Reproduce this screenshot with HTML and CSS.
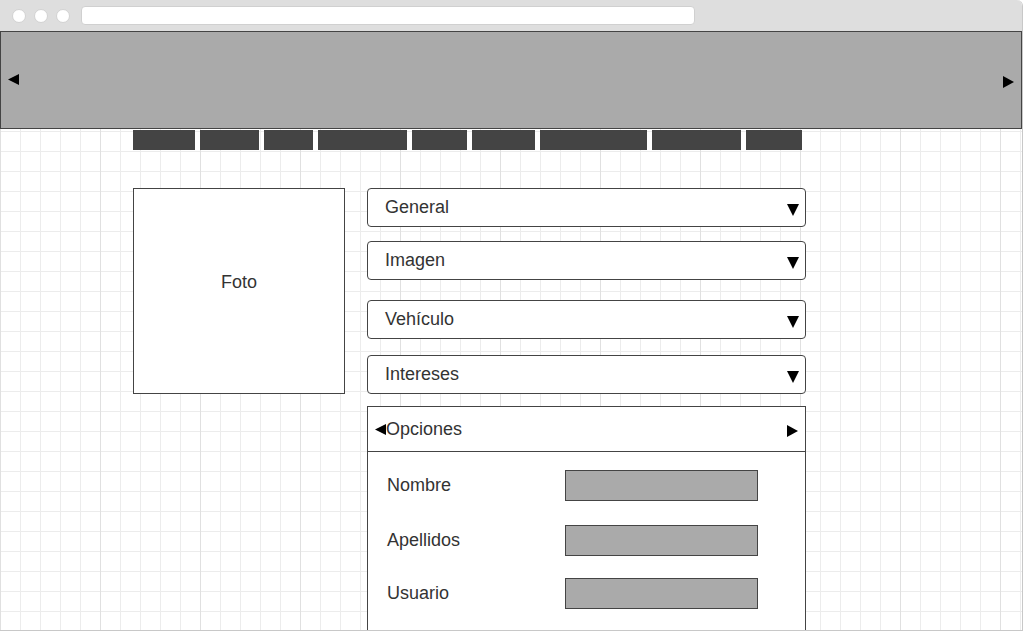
FILE: index.html
```html
<!doctype html>
<html lang="es">
	<head>
		<meta charset="UTF-8" />
		<title>Perfil</title>
		<link rel="stylesheet" href="styles.css">
	</head>
	<body>
		<div class="window">
			<div class="chrome">
				<span class="dot"></span>
				<span class="dot"></span>
				<span class="dot"></span>
				<div class="url"></div>
			</div>
			<div class="canvas">
				<!-- cabecera / carrusel -->
				<div class="banner">
					<svg class="arrow" width="11" height="11" viewBox="0 0 11 11"><path d="M0 5.5 L11 0 L11 11 Z" /></svg>
					<svg class="arrow" width="11" height="12" viewBox="0 0 11 12"><path d="M0 0 L11 6 L0 12 Z" /></svg>
				</div>
				<div class="menu">
					<span class="tab tab-1"></span>
					<span class="tab tab-2"></span>
					<span class="tab tab-3"></span>
					<span class="tab tab-4"></span>
					<span class="tab tab-5"></span>
					<span class="tab tab-6"></span>
					<span class="tab tab-7"></span>
					<span class="tab tab-8"></span>
					<span class="tab tab-9"></span>
				</div>
				<div class="content">
					<div class="photo">Foto</div>
					<div class="sections">
						<div class="section">
							<span>General</span>
							<svg class="caret" width="12" height="12" viewBox="0 0 12 12"><path d="M0 0 L12 0 L6 12 Z" /></svg>
						</div>
						<div class="section">
							<span>Imagen</span>
							<svg class="caret" width="12" height="12" viewBox="0 0 12 12"><path d="M0 0 L12 0 L6 12 Z" /></svg>
						</div>
						<div class="section gap-20">
							<span>Vehículo</span>
							<svg class="caret" width="12" height="12" viewBox="0 0 12 12"><path d="M0 0 L12 0 L6 12 Z" /></svg>
						</div>
						<div class="section gap-16">
							<span>Intereses</span>
							<svg class="caret" width="12" height="12" viewBox="0 0 12 12"><path d="M0 0 L12 0 L6 12 Z" /></svg>
						</div>
						<div class="panel">
							<div class="panel-head">
								<span class="panel-title">
									<svg width="11" height="11" viewBox="0 0 11 11"><path d="M0 5.5 L11 0 L11 11 Z" /></svg>Opciones
								</span>
								<svg width="11" height="12" viewBox="0 0 11 12"><path d="M0 0 L11 6 L0 12 Z" /></svg>
							</div>
							<div class="panel-body">
								<div class="row">
									<label>Nombre</label>
									<span class="field"></span>
								</div>
								<div class="row">
									<label>Apellidos</label>
									<span class="field"></span>
								</div>
								<div class="row row-last">
									<label>Usuario</label>
									<span class="field"></span>
								</div>
							</div>
						</div>
					</div>
				</div>
			</div>
		</div>
	</body>
</html>
```

FILE: styles.css
```css
* {
	margin: 0;
	padding: 0;
	box-sizing: border-box;
}
body {
	font-family: "Liberation Sans", Arial, sans-serif;
	font-size: 18px;
	color: #333;
	background: #fff;
}
.window {
	width: 1023px;
	height: 631px;
	border: 1px solid #c8c8c8;
	border-top: none;
	border-left: none;
	border-radius: 0 6px 0 0;
	overflow: hidden;
	display: flex;
	flex-direction: column;
}
.chrome {
	height: 31px;
	flex-shrink: 0;
	background: #dedede;
	display: flex;
	align-items: center;
	padding-left: 12px;
	gap: 8px;
}
.dot {
	width: 14px;
	height: 14px;
	border-radius: 50%;
	background: #fff;
	border: 1px solid #d2d2d2;
}
.url {
	width: 614px;
	height: 19px;
	margin-left: 3px;
	background: #fff;
	border: 1px solid #d0d0d0;
	border-radius: 4px;
}
.canvas {
	flex: 1;
	background-color: #fff;
	background-image:
		linear-gradient(90deg, #e0e0e0 1px, transparent 1px),
		linear-gradient(90deg, #ececec 1px, transparent 1px),
		linear-gradient(#ececec 1px, transparent 1px);
	background-size: 100px 100%, 20px 20px, 20px 20px;
}
.banner {
	height: 98px;
	background: #aaa;
	border: 1px solid #444;
	display: flex;
	align-items: center;
	justify-content: space-between;
	padding: 0 7px 2px 7px;
}
.arrow {
	fill: #000;
}
.banner .arrow:last-child {
	margin-top: 6px;
}
.menu {
	display: flex;
	gap: 5px;
	margin: 1px 0 0 133px;
}
.tab {
	height: 20px;
	background: #444;
}
.tab-1 { width: 62px; }
.tab-2 { width: 59px; }
.tab-3 { width: 49px; }
.tab-4 { width: 89px; }
.tab-5 { width: 55px; }
.tab-6 { width: 63px; }
.tab-7 { width: 107px; }
.tab-8 { width: 89px; }
.tab-9 { width: 56px; }
.content {
	display: flex;
	align-items: flex-start;
	gap: 22px;
	margin: 38px 0 0 133px;
}
.photo {
	width: 212px;
	height: 206px;
	border: 1px solid #444;
	background: #fff;
	display: flex;
	align-items: center;
	justify-content: center;
	padding-bottom: 18px;
}
.sections {
	width: 439px;
	display: flex;
	flex-direction: column;
}
.section {
	height: 39px;
	border: 1px solid #444;
	border-radius: 4px;
	background: #fff;
	display: flex;
	align-items: center;
	justify-content: space-between;
	padding: 0 6px 0 17px;
}
.section + .section {
	margin-top: 14px;
}
.section.gap-20 {
	margin-top: 20px;
}
.section.gap-16 {
	margin-top: 16px;
}
.caret {
	margin-top: 5px;
	fill: #000;
}
.panel {
	margin-top: 12px;
	border: 1px solid #444;
	background: #fff;
	height: 226px;
}
.panel-head {
	height: 45px;
	border-bottom: 1px solid #444;
	display: flex;
	align-items: center;
	justify-content: space-between;
	padding: 0 7px 0 7px;
}
.panel-title {
	display: flex;
	align-items: center;
}
.panel-head svg {
	fill: #000;
}
.panel-head > svg {
	margin-top: 3px;
}
.panel-body {
	display: flex;
	flex-direction: column;
	padding: 18px 0 0 19px;
}
.row {
	display: flex;
	align-items: center;
	height: 31px;
}
.row + .row {
	margin-top: 24px;
}
.row.row-last {
	margin-top: 22px;
}
.row label {
	width: 178px;
}
.field {
	width: 193px;
	height: 31px;
	background: #aaa;
	border: 1px solid #444;
}
```
